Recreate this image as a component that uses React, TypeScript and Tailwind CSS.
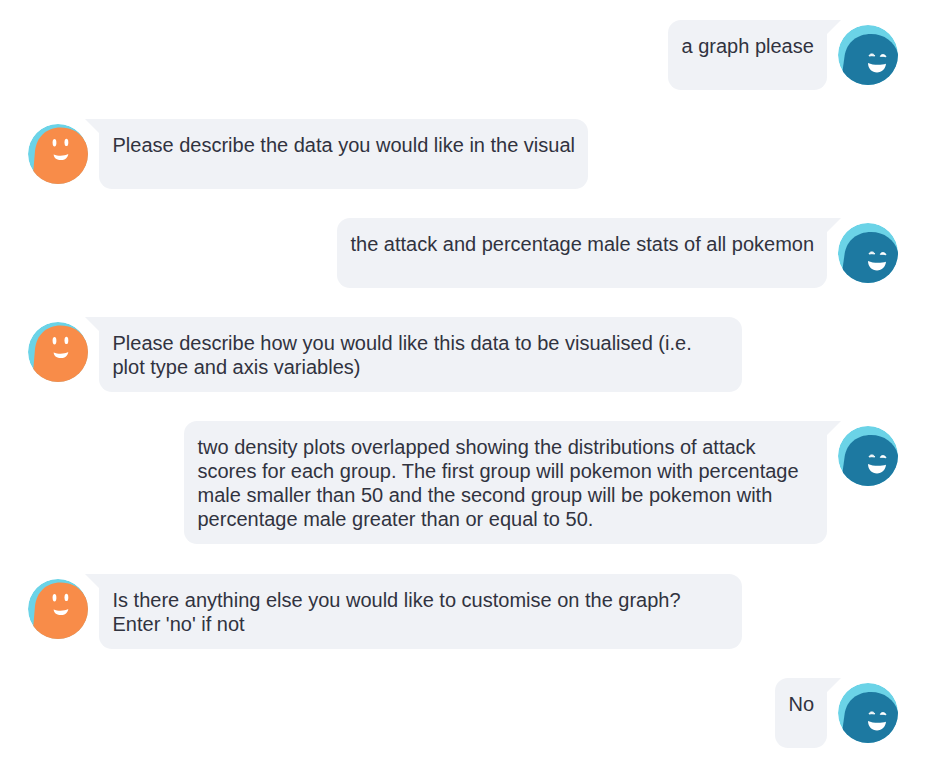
type Message = { from: "bot" | "user"; lines: string[]; width: string; gap: string };

const messages: Message[] = [
  { from: "user", lines: ["a graph please"], width: "w-[159px]", gap: "mb-[29px]" },
  { from: "bot", lines: ["Please describe the data you would like in the visual"], width: "w-[489px]", gap: "mb-[29px]" },
  { from: "user", lines: ["the attack and percentage male stats of all pokemon"], width: "w-[490px]", gap: "mb-[29px]" },
  {
    from: "bot",
    lines: ["Please describe how you would like this data to be visualised (i.e.", "plot type and axis variables)"],
    width: "w-[643px]",
    gap: "mb-[29px]",
  },
  {
    from: "user",
    lines: [
      "two density plots overlapped showing the distributions of attack",
      "scores for each group. The first group will pokemon with percentage",
      "male smaller than 50 and the second group will be pokemon with",
      "percentage male greater than or equal to 50.",
    ],
    width: "w-[643px]",
    gap: "mb-[30px]",
  },
  {
    from: "bot",
    lines: ["Is there anything else you would like to customise on the graph?", "Enter 'no' if not"],
    width: "w-[643px]",
    gap: "mb-[29px]",
  },
  { from: "user", lines: ["No"], width: "w-[52px]", gap: "mb-0" },
];

function UserAvatar() {
  return (
    <svg viewBox="0 0 60 60" className="mt-[5px] size-[60px] shrink-0 rounded-full">
      <circle cx="30" cy="30" r="30" fill="#6bd3e7" />
      <path d="M4.5 46 L6.6 31 C8.5 17.5 19 9 33 9 C48 9 59 19 61 33 V60 H4.5 Z" fill="#1d79a1" />
      <path d="M31 31 C31.6 28.2 36 28.2 36.8 31 C34.8 30.6 33 30.6 31 31 Z" fill="#fff" stroke="#fff" strokeWidth=".9" strokeLinejoin="round" />
      <path d="M42.3 31.4 C43 28.8 47.2 28.9 48 31.8 C46 31.3 44.3 31.1 42.3 31.4 Z" fill="#fff" stroke="#fff" strokeWidth=".9" strokeLinejoin="round" />
      <path d="M30 38 C35 40.3 43 40.3 48 38.8 C47.6 44 43.8 47.5 39 47.5 C34.2 47.5 30 43.7 30 38 Z" fill="#fff" />
    </svg>
  );
}

function BotAvatar() {
  return (
    <svg viewBox="0 0 60 60" className="mt-[5px] size-[60px] shrink-0 rounded-full">
      <circle cx="30" cy="30" r="30" fill="#6bd3e7" />
      <path d="M5.3 47 L7 27 C8.5 13 18.5 3.5 32.5 3.5 C42 3.5 49.5 7 55 14 L61 24 V60 H5.3 Z" fill="#f88c49" />
      <ellipse cx="26.5" cy="18.7" rx="1.9" ry="3.7" fill="#fff" />
      <ellipse cx="38.4" cy="18.4" rx="1.9" ry="3.7" fill="#fff" />
      <path d="M25.6 30.4 C30 32.1 36 32.1 40.3 30 C39.8 33.8 37 36.1 33 36.1 C29 36.1 26 34 25.6 30.4 Z" fill="#fff" />
    </svg>
  );
}

function ChatRow({ message }: { message: Message }) {
  const isUser = message.from === "user";
  return (
    <div className={`flex gap-[11px] ${isUser ? "flex-row-reverse" : ""} ${message.gap}`}>
      {isUser ? <UserAvatar /> : <BotAvatar />}
      <div className={`relative min-h-[70px] rounded-[13px] bg-[#f0f2f6] px-[13.5px] py-[13.5px] ${message.width} ${isUser ? "rounded-tr-none" : "rounded-tl-none"}`}>
        <svg
          viewBox="0 0 14 14"
          className={`absolute top-0 size-[14px] ${isUser ? "left-full" : "right-full -scale-x-100"}`}
        >
          <path d="M0 0 H14 L0 14 Z" fill="#f0f2f6" />
        </svg>
        {message.lines.map((line) => (
          <p key={line} className="whitespace-nowrap">
            {line}
          </p>
        ))}
      </div>
    </div>
  );
}

export default function App() {
  return (
    <main className="h-[767px] w-[934px] overflow-hidden bg-white pt-5 pr-9 pl-7 font-['Liberation_Sans',Arial,sans-serif] text-[20px] leading-6 text-[#31333f]">
      {messages.map((message) => (
        <ChatRow key={message.lines[0]} message={message} />
      ))}
    </main>
  );
}
